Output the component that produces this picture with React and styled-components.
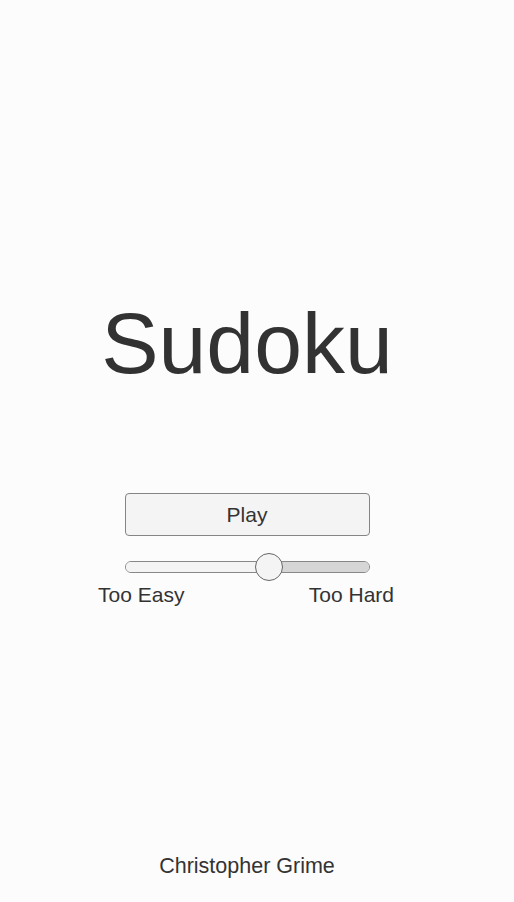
import styled, { createGlobalStyle } from "styled-components";

const GlobalStyle = createGlobalStyle`
  html, body {
    margin: 0;
    padding: 0;
    background-color: #fcfcfc;
  }
  body {
    font-family: "Liberation Sans", Arial, sans-serif;
    color: #333333;
  }
`;

const Screen = styled.div`
  width: 494px;
  height: 902px;
  display: flex;
  flex-direction: column;
  align-items: center;
  box-sizing: border-box;
  padding-bottom: 25px;
`;

const Title = styled.h1`
  margin: 300px 0 0;
  font-size: 86px;
  line-height: 86px;
  font-weight: 400;
  color: #323232;
`;

const PlayButton = styled.button`
  margin-top: 107px;
  width: 245px;
  height: 43px;
  box-sizing: border-box;
  border: 1px solid #858585;
  border-radius: 4px;
  background-color: #f4f4f4;
  font-family: "Liberation Sans", Arial, sans-serif;
  font-size: 21px;
  color: #333333;
  padding: 0;
`;

const SliderRow = styled.div`
  margin-top: 17px;
  width: 245px;
  height: 28px;
  display: flex;
  align-items: center;
  position: relative;
`;

const Track = styled.div`
  width: 100%;
  height: 12px;
  box-sizing: border-box;
  border: 1px solid #888888;
  border-radius: 6px;
  overflow: hidden;
  display: flex;
`;

const TrackPart = styled.div`
  height: 100%;
  flex: ${(p) => p.$grow};
  background-color: ${(p) => (p.$filled ? "#f4f4f4" : "#d6d6d6")};
`;

const Thumb = styled.div`
  position: absolute;
  top: 0;
  width: 28px;
  height: 28px;
  box-sizing: border-box;
  margin-left: -14px;
  border-radius: 50%;
  border: 1px solid #666666;
  background-color: #f4f4f4;
`;

const Labels = styled.div`
  margin-top: 3px;
  width: 298px;
  padding-right: 2px;
  box-sizing: border-box;
  display: flex;
  justify-content: space-between;
  font-size: 21px;
  line-height: 21px;
`;

const Footer = styled.div`
  margin-top: auto;
  font-size: 21.5px;
  line-height: 21px;
`;

const Slider = ({ value }) => {
  const pos = 14 + value * (245 - 28);
  return (
    <SliderRow>
      <Track>
        <TrackPart $filled $grow={pos} />
        <TrackPart $grow={245 - pos} />
      </Track>
      <Thumb style={{ left: `${pos}px` }} />
    </SliderRow>
  );
};

export default function App() {
  return (
    <>
      <GlobalStyle />
      <Screen>
        <Title>Sudoku</Title>
        <PlayButton>Play</PlayButton>
        <Slider value={0.6} />
        <Labels>
          <span>Too Easy</span>
          <span>Too Hard</span>
        </Labels>
        <Footer>Christopher Grime</Footer>
      </Screen>
    </>
  );
}
